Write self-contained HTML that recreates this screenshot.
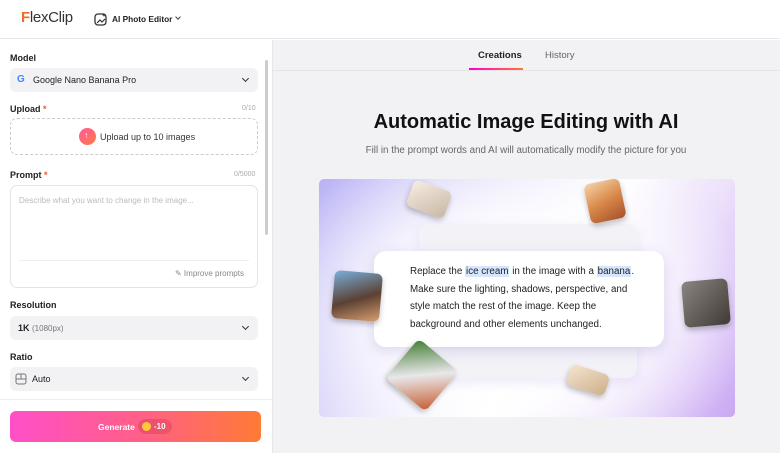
<!DOCTYPE html>
<html><head><meta charset="utf-8"><style>
*{box-sizing:border-box;margin:0;padding:0}
body{width:780px;height:453px;overflow:hidden;font-family:"Liberation Sans",sans-serif;background:#fff;position:relative;color:#1a1a1a}
.abs{position:absolute}
.hdr{left:0;top:0;width:780px;height:39px;border-bottom:1px solid #e8e8ec;background:#fff}
.lbl{font-size:9px;font-weight:bold;color:#222}
.sel{left:10px;width:248px;height:24px;background:#f2f2f5;border-radius:6px;font-size:9px;color:#222}
.chev{position:absolute;right:10px;top:8px;width:5px;height:5px;border-right:1.3px solid #333;border-bottom:1.3px solid #333;transform:rotate(45deg)}
.cnt{font-size:7px;color:#aaa}
.right{left:272px;top:40px;width:508px;height:413px;background:#f2f2f5;border-left:1px solid #e6e6ea}
.thumb{position:absolute;border-radius:6px;box-shadow:0 3px 6px rgba(0,0,0,.25)}
</style></head><body>
<div class="abs hdr"></div>
<div class="abs" style="left:21px;top:9px;font-size:15px;color:#333;letter-spacing:-0.3px"><span style="color:#f26b22;font-weight:bold">F</span>lexClip</div>
<svg class="abs" style="left:94px;top:12px" width="14" height="14" viewBox="0 0 14 14"><rect x="1" y="2" width="11" height="11" rx="3" fill="none" stroke="#333" stroke-width="1.3"/><path d="M3 11l3-3 2 2 3-3" fill="none" stroke="#333" stroke-width="1.2"/><path d="M10 1l.6 1.4L12 3l-1.4.6L10 5l-.6-1.4L8 3l1.4-.6z" fill="#333"/></svg>
<div class="abs" style="left:112px;top:14px;font-size:8.3px;font-weight:bold;color:#222">AI Photo Editor</div>
<div class="abs" style="left:176px;top:15px;width:4px;height:4px;border-right:1.2px solid #444;border-bottom:1.2px solid #444;transform:rotate(45deg)"></div>

<div class="abs lbl" style="left:10px;top:53px">Model</div>
<div class="abs sel" style="top:68px"><span style="position:absolute;left:7px;top:6px;font-weight:bold;font-size:10px;color:#4285f4">G</span><span style="position:absolute;left:23px;top:7px">Google Nano Banana Pro</span><div class="chev"></div></div>
<div class="abs lbl" style="left:10px;top:104px">Upload <span style="color:#e53">*</span></div>
<div class="abs cnt" style="left:242px;top:105px">0/10</div>
<div class="abs" style="left:10px;top:118px;width:248px;height:37px;border:1px dashed #ccc;border-radius:7px"></div>
<div class="abs" style="left:79px;top:128px;width:17px;height:17px;border-radius:50%;background:linear-gradient(135deg,#ff5aa0,#ff7a3d)"></div>
<div class="abs" style="left:84px;top:130px;color:#fff;font-size:9px;font-weight:bold">↑</div>
<div class="abs" style="left:100px;top:132px;font-size:9px;color:#333">Upload up to 10 images</div>
<div class="abs lbl" style="left:10px;top:170px">Prompt <span style="color:#e53">*</span></div>
<div class="abs cnt" style="left:234px;top:171px">0/5000</div>
<div class="abs" style="left:10px;top:185px;width:248px;height:103px;border:1px solid #e3e3e8;border-radius:7px"></div>
<div class="abs" style="left:19px;top:196px;font-size:8px;color:#bbb">Describe what you want to change in the image...</div>
<div class="abs" style="left:19px;top:260px;width:230px;height:1px;background:#eee"></div>
<div class="abs" style="left:175px;top:269px;font-size:8px;color:#888">✎ Improve prompts</div>
<div class="abs lbl" style="left:10px;top:300px">Resolution</div>
<div class="abs sel" style="top:316px"><span style="position:absolute;left:8px;top:7px;font-weight:bold">1K <span style="font-weight:normal;color:#777;font-size:8px">(1080px)</span></span><div class="chev"></div></div>
<div class="abs lbl" style="left:10px;top:352px">Ratio</div>
<div class="abs sel" style="top:367px"><svg style="position:absolute;left:5px;top:6px" width="12" height="12"><rect x="1" y="1" width="10" height="10" rx="2" fill="none" stroke="#777"/><path d="M1 6h10M6 1v5" stroke="#777"/></svg><span style="position:absolute;left:22px;top:7px">Auto</span><div class="chev"></div></div>
<div class="abs" style="left:265px;top:60px;width:3px;height:175px;background:#ccc;border-radius:2px"></div>
<div class="abs" style="left:0;top:399px;width:272px;height:1px;background:#eee"></div>
<div class="abs" style="left:10px;top:411px;width:251px;height:31px;border-radius:6px;background:linear-gradient(90deg,#ff4fc8,#ff5f8a 50%,#ff7a35)"></div>
<div class="abs" style="left:98px;top:422px;font-size:8.5px;font-weight:bold;color:#fff">Generate</div>
<div class="abs" style="left:138px;top:419px;width:34px;height:15px;border-radius:8px;background:rgba(200,40,80,.3)"></div>
<div class="abs" style="left:142px;top:422px;width:9px;height:9px;border-radius:50%;background:#ffc933"></div>
<div class="abs" style="left:154px;top:422px;font-size:8px;font-weight:bold;color:#fff">-10</div>

<div class="abs right"></div>
<div class="abs" style="left:273px;top:70px;width:507px;height:1px;background:#e4e4ea"></div>
<div class="abs" style="left:478px;top:50px;font-size:9.5px;font-weight:bold;color:#222">Creations</div>
<div class="abs" style="left:545px;top:50px;font-size:9.5px;color:#666">History</div>
<div class="abs" style="left:469px;top:68px;width:54px;height:2px;background:linear-gradient(90deg,#f0c,#f73)"></div>
<div class="abs" style="left:272px;top:111px;width:508px;text-align:center;font-size:20px;font-weight:bold;color:#111">Automatic Image Editing with AI</div>
<div class="abs" style="left:272px;top:145px;width:508px;text-align:center;font-size:9.8px;color:#666">Fill in the prompt words and AI will automatically modify the picture for you</div>
<div class="abs" style="left:319px;top:179px;width:416px;height:238px;border-radius:5px;overflow:hidden;background:radial-gradient(ellipse 60% 75% at 45% 55%,#fff 40%,rgba(255,255,255,0) 100%),linear-gradient(120deg,#b9b3f5 0%,#e8e4fb 35%,#fff 55%,#ece0fb 75%,#c9a8f3 100%)">
 <div class="abs" style="left:100px;top:45px;width:218px;height:154px;border-radius:10px;background:#f3f2f7;box-shadow:0 4px 12px rgba(120,100,200,.15)"></div>
 <div class="abs" style="left:55px;top:72px;width:290px;height:96px;border-radius:12px;background:#fff;box-shadow:0 4px 14px rgba(100,80,180,.2)"></div>
 <div class="abs" style="left:91px;top:84px;font-size:9.8px;line-height:17.5px;color:#222;width:260px">Replace the <span style="background:#d6e6ff;padding:0 1px">ice cream</span> in the image with a <span style="background:#d6e6ff;padding:0 1px">banana</span>.<br>Make sure the lighting, shadows, perspective, and<br>style match the rest of the image. Keep the<br>background and other elements unchanged.</div>
 <div class="thumb" style="left:90px;top:6px;width:40px;height:28px;background:linear-gradient(135deg,#f7ede2,#c8b7a5);transform:rotate(20deg)"></div>
 <div class="thumb" style="left:268px;top:2px;width:36px;height:40px;background:linear-gradient(160deg,#f5d3a8,#d88a4a,#a8512a);transform:rotate(-12deg)"></div>
 <div class="thumb" style="left:14px;top:93px;width:48px;height:48px;background:linear-gradient(160deg,#7ab0dd,#5b4133 55%,#d9a070);transform:rotate(5deg)"></div>
 <div class="thumb" style="left:364px;top:101px;width:46px;height:46px;background:linear-gradient(135deg,#8a8580,#3f3a35);transform:rotate(-5deg)"></div>
 <div class="thumb" style="left:77px;top:170px;width:52px;height:52px;background:linear-gradient(135deg,#3f7a2f,#e8e8ea 50%,#c65a2e);transform:rotate(40deg)"></div>
 <div class="thumb" style="left:249px;top:190px;width:40px;height:22px;background:linear-gradient(135deg,#f4e4cf,#cdb08a);transform:rotate(18deg)"></div>
</div>
</body></html>
